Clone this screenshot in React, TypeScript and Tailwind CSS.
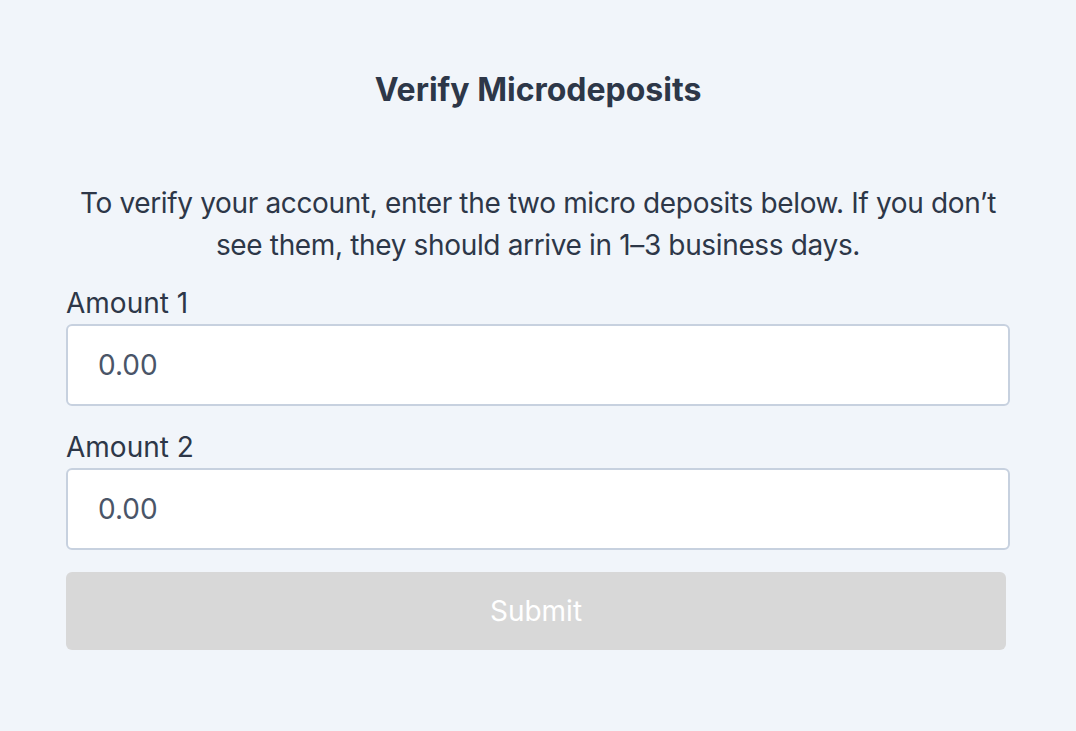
import React, { useState } from 'react';

export default function App() {
  const [amount1, setAmount1] = useState('');
  const [amount2, setAmount2] = useState('');
  const ready = amount1 !== '' && amount2 !== '';

  return (
    <div
      className="min-h-screen bg-[#f1f5fa] text-[#2d3748] px-[66px] pt-[66px]"
      style={{ fontFamily: 'Inter, "Noto Sans", sans-serif' }}
    >
      <h1 className="text-center text-[32px] font-bold leading-[48px]">Verify Microdeposits</h1>

      <p className="mt-[68px] text-center text-[28px] leading-[42px] tracking-[-0.35px]">
        To verify your account, enter the two micro deposits below. If you don’t see them, they
        should arrive in 1–3 business days.
      </p>

      <form className="mt-[16px] flex flex-col" onSubmit={(e) => e.preventDefault()}>
        <label className="text-[28px] leading-[42px]">Amount 1</label>
        <input
          value={amount1}
          onChange={(e) => setAmount1(e.target.value)}
          placeholder="0.00"
          className="h-[82px] w-full rounded-[6px] border-2 border-[#c7d1df] bg-white px-[30px] text-[28px] text-[#4a5568] placeholder:text-[#4a5568] outline-none"
        />

        <label className="mt-[20px] text-[28px] leading-[42px]">Amount 2</label>
        <input
          value={amount2}
          onChange={(e) => setAmount2(e.target.value)}
          placeholder="0.00"
          className="h-[82px] w-full rounded-[6px] border-2 border-[#c7d1df] bg-white px-[30px] text-[28px] text-[#4a5568] placeholder:text-[#4a5568] outline-none"
        />

        <button
          type="submit"
          disabled={!ready}
          className="mt-[22px] mr-[4px] h-[78px] rounded-[6px] bg-[#d8d8d8] text-[28px] text-white"
        >
          Submit
        </button>
      </form>
    </div>
  );
}
